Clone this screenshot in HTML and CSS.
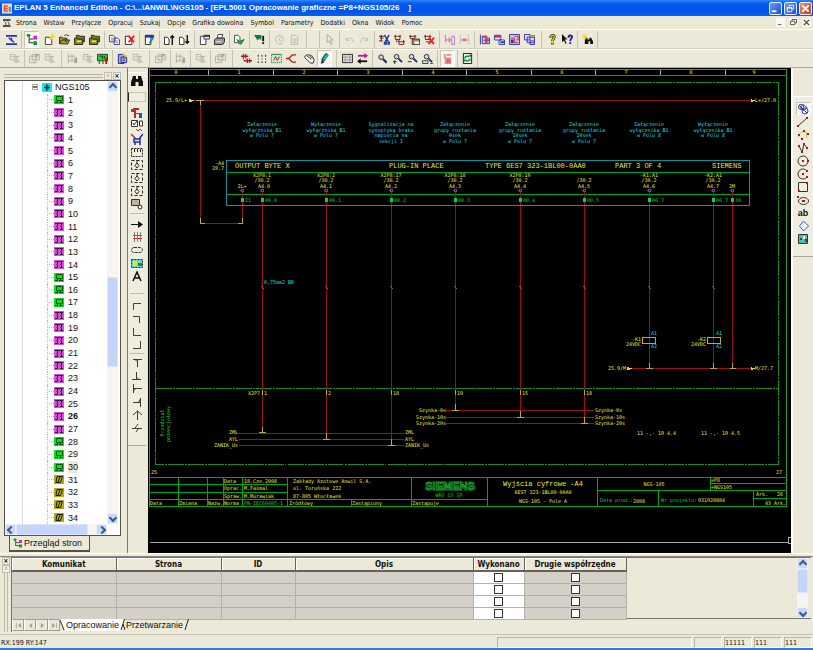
FILE: index.html
```html
<!DOCTYPE html>
<html lang="pl">
<head>
<meta charset="utf-8">
<title>EPLAN 5 Enhanced Edition</title>
<link rel="stylesheet" href="styles.css">
</head>
<body>
<svg class="defs" aria-hidden="true">
  <symbol id="i-page-a" viewBox="0 0 12 12"><path fill="#2030d0" d="M0 1h12v2H0zM0 10h12v2H0z"/><path fill="none" stroke="#2030d0" stroke-width="1.5" d="M3 4l3 3 3 2M6 4v3"/></symbol>
  <symbol id="i-tree" viewBox="0 0 12 12"><path fill="none" stroke="#222" d="M1 1.500h4M3.500 2v8M4 5.500h4M4 9.500h4"/><path fill="#e020c0" d="M8 2h4v4H8z"/><path fill="#00a030" d="M8 8h4v4H8zM1 0h3v3H1z"/></symbol>
  <symbol id="i-new" viewBox="0 0 12 12"><path fill="#fff" stroke="#333" d="M1.500 3.500h4l3 3v5h-7z"/><path fill="none" stroke="#e8d820" d="M9 0v6M6 3h6M7 1l4 4M11 1L7 5"/></symbol>
  <symbol id="i-open" viewBox="0 0 12 12"><path fill="#a8a020" stroke="#222" d="M.5 10.500v-7h3l1 1h4v2h3l-2 4.500z"/><path stroke="#222" fill="none" d="M.5 10.500l2.500-4h6M6 2c1-2 3-1 4 0l1-1M6 7l3 2"/></symbol>
  <symbol id="i-folder" viewBox="0 0 12 12"><path fill="#807c18" stroke="#222" d="M2.500 4.500v-3h3l1 1h5v6h-2M.5 11.500v-7h3l1 1h5v6z"/><path fill="#eee860" d="M3 7h5v2H3z"/></symbol>
  <symbol id="i-copy" viewBox="0 0 12 12"><path fill="#fff" stroke="#383880" d="M.5 1.500h4l2 2v5h-6zM5.500 4.500h4l2 2v5h-6z"/><path stroke="#7078c0" d="M2 4.500h3M2 6.500h3M7 7.500h3M7 9.500h3"/></symbol>
  <symbol id="i-docdel" viewBox="0 0 12 12"><path fill="#fff" stroke="#222" d="M1.500 2.500h4l3 3v6h-7z"/><path stroke="#f01818" stroke-width="2" d="M5 2l6 7M11 2L5 9"/></symbol>
  <symbol id="i-docedit" viewBox="0 0 12 12"><path fill="#fff" stroke="#222" d="M1.500 1.500h9v2h-3v8h-6z"/><path fill="#2038c0" d="M1 1h9v3H1z"/><path stroke="#1890a0" stroke-width="2" d="M10 4l-4 6"/></symbol>
  <symbol id="i-docup" viewBox="0 0 12 12"><path fill="#fff" stroke="#222" d="M.5 3.500h3l2 2v6h-5z"/><path stroke="#111" fill="none" stroke-width="1.500" d="M9 12V2M7 4l2-2 2 2"/></symbol>
  <symbol id="i-docdown" viewBox="0 0 12 12"><path fill="#fff" stroke="#222" d="M.5 3.500h3l2 2v6h-5z"/><path stroke="#111" fill="none" stroke-width="1.500" d="M9 1v9M7 8l2 2 2-2"/></symbol>
  <symbol id="i-preview" viewBox="0 0 12 12"><path fill="#fff" stroke="#333" d="M1.500 2.500h4l2 2v7h-6z"/><path fill="#dde" stroke="#335" d="M5.500 1.500h6v4h-6z"/><path fill="#335" d="M5 1h7v2H5z"/></symbol>
  <symbol id="i-print" viewBox="0 0 12 12"><path fill="#fff" stroke="#333" d="M4.500.5h5l-1 4h-5z"/><path fill="#999" stroke="#222" d="M.5 6.500l2-2h9v4l-2 3h-9z"/><path fill="#eee" d="M2 8h6v1H2z"/></symbol>
  <symbol id="i-check" viewBox="0 0 12 12"><path fill="#fff" stroke="#444" d="M.5 1.500h4l2 2v6h-6z"/><path stroke="#188038" fill="#30a050" d="M3 6l3 2 5-2-3 5H6z"/></symbol>
  <symbol id="i-warn" viewBox="0 0 12 12"><path fill="#107830" d="M0 1h8v5H6V4L4 7z"/><path fill="#111" d="M9 2h2v6H9zM9 9h2v2H9z"/></symbol>
  <symbol id="i-at" viewBox="0 0 12 12"><path fill="none" stroke="#bbb8aa" d="M10 10c-5 3-9-1-8-5s6-5 8-1-4 6-4 2 3-1 3-1"/></symbol>
  <symbol id="i-gdoc" viewBox="0 0 12 12"><path fill="none" stroke="#bbb8aa" d="M2.500 1.500h5l2 2v8h-7zM4 5.500h4M4 7.500h4M4 9.500h4"/></symbol>
  <symbol id="i-gcur" viewBox="0 0 12 12"><path fill="none" stroke="#aaa69a" d="M3.500.5v9l2-2 2 4 1.500-1-2-4h3z"/></symbol>
  <symbol id="i-undo" viewBox="0 0 12 12"><path fill="none" stroke="#bbb8aa" d="M2.500 4v3h3M3 7c2-4 7-3 7 2"/></symbol>
  <symbol id="i-redo" viewBox="0 0 12 12"><path fill="none" stroke="#bbb8aa" d="M9.500 4v3h-3M9 7C7 3 2 4 2 9"/></symbol>
  <symbol id="i-cut" viewBox="0 0 12 12"><path fill="none" stroke="#501818" d="M0 2.500h6M2.500 1v7M0 7.500h4M1 4.500h4"/><path fill="none" stroke="#2038a0" stroke-width="1.500" d="M6 1l4 7M11 1L7 8M6 9h2v2H6zM10 9h2v2h-2z"/></symbol>
  <symbol id="i-symb" viewBox="0 0 12 12"><path fill="none" stroke="#702020" d="M0 2.500h8M1.500 1v5h5V1M4 8.500h8M5.500 6.500v5h5v-5M3 6v3"/></symbol>
  <symbol id="i-paste" viewBox="0 0 12 12"><path fill="none" stroke="#702020" d="M0 2.500h8M1.500 1v4h5V1"/><path fill="#a09040" stroke="#333" d="M3.500 5.500h8v6h-8z"/><path fill="#eee" d="M6 8h5v3H6z"/></symbol>
  <symbol id="i-symdel" viewBox="0 0 12 12"><path fill="none" stroke="#702020" d="M0 2.500h8M1.500 1v5h5V1M2 8.500h5"/><path stroke="#e82020" stroke-width="2" d="M5 4l6 7M11 4l-6 7"/></symbol>
  <symbol id="i-in" viewBox="0 0 12 12"><path fill="none" stroke="#a878c8" d="M1.500 1v8M8.500 2.500h3v9h-3z"/><path fill="none" stroke="#d05070" d="M2 6.500h5M5 4l2 2.500L5 9"/></symbol>
  <symbol id="i-out" viewBox="0 0 12 12"><path fill="none" stroke="#c8c0b4" d="M1.500 1v10M10.500 1v10"/><path fill="#d87878" d="M4 5h4v3H4zM2 6h8v1H2z"/></symbol>
  <symbol id="i-blk" viewBox="0 0 12 12"><path fill="#d8d4ee" stroke="#3030a0" d="M1.500.5v11M3.500 2.500h4v8h-4zM8.500 4.500h3v6h-3z"/><path fill="#d03060" d="M4 2h5v2H4zM5 6h6v2H5z"/></symbol>
  <symbol id="i-blk2" viewBox="0 0 12 12"><path fill="#eee" stroke="#3030a0" d="M.5 1.500h7v5h-7zM5.500 6.500h6v5h-6z"/><path fill="#c82090" d="M1 1h6v3H1z"/><path fill="#2830a0" d="M7 8h4v2H7z"/></symbol>
  <symbol id="i-blk3" viewBox="0 0 12 12"><path fill="#c8c4ec" stroke="#3030b0" d="M.5.5h11v11H.5z"/><path fill="none" stroke="#c03050" d="M2 4.500h4v5h4M6 2.500h4v4H8"/><path fill="#3030a0" d="M2 6h3v4H2z"/></symbol>
  <symbol id="i-blk4" viewBox="0 0 12 12"><path fill="#dcd8f4" stroke="#3030b0" d="M.5.500h6v6h-6zM3.500 3.500h8v6h-8zM6.500 7.500h5v4h-5z"/><path fill="#a0a020" d="M7 1h5v2H7z"/></symbol>
  <symbol id="i-help" viewBox="0 0 12 12"><path fill="none" stroke="#222" stroke-width="3" d="M4 4c0-3 4-3 4-1 0 2-2 2-2 5M6 9.500v2"/><path fill="none" stroke="#d8d020" stroke-width="1.500" d="M4 4c0-3 4-3 4-1 0 2-2 2-2 5M6 9.500v2"/></symbol>
  <symbol id="i-chelp" viewBox="0 0 12 12"><path fill="#111" d="M0 0v9l2-2 2 4 1-1-2-4h3z"/><path fill="none" stroke="#202090" stroke-width="2" d="M7 4c0-3 4-3 4-1S9 5 9 8M9 9v2"/></symbol>
  <symbol id="i-find" viewBox="0 0 12 12"><path fill="#111" d="M2 1h3v3h2V1h3l2 6v4H7.500V7h-3v4H0V7z"/></symbol>
  <symbol id="i-findy" viewBox="0 0 12 12"><path fill="#111" d="M4 4h2v2h2V4h2l2 4v3H9V8H7v3H3V8z"/><path stroke="#e8d820" d="M3 0v6M0 3h6M1 1l4 4M5 1L1 5"/></symbol>
  <symbol id="i-g1" viewBox="0 0 12 12"><path fill="none" stroke="#b8b4a6" d="M1.500 1.500h5v6h-5zM3 4h8M8.500 3v8M5 9.500h7"/><path fill="#c8c4b6" d="M6 6h4v4H6z"/></symbol>
  <symbol id="i-g2" viewBox="0 0 12 12"><path fill="none" stroke="#b4b0a2" d="M.5 3.500h7v7h-7zM3.500 1.500h8v6h-8zM2 6l4 3M6 3l3 3"/><path fill="#aaa698" d="M7 1h3v3H7z"/></symbol>
  <symbol id="i-g3" viewBox="0 0 12 12"><path fill="none" stroke="#b4b0a2" d="M1.500 0v11M1 3.500h8M5.500 1v8M1 8.500h10"/><path fill="#aaa698" d="M8 5h3v6H8z"/></symbol>
  <symbol id="i-green" viewBox="0 0 12 12"><path fill="#20d040" stroke="#184018" d="M.5 1.500h11v7H.5z"/><path stroke="#104010" fill="none" d="M3 3.500h3v3M8 3v3M2.500 9v3M6.500 9v3"/><path fill="#d01010" d="M9 5h2v7H9z"/></symbol>
  <symbol id="i-docclk" viewBox="0 0 12 12"><path fill="#a8a8e0" stroke="#202080" d="M1.500 1.500h6v10h-6z"/><path stroke="#202080" fill="#c8c8f0" d="M4.500 4.500h6v6h-6z"/><path stroke="#202080" d="M6 6.500h3M6 8.500h3"/><path fill="#e8d820" d="M6 0h2v3H6zM9 2h2v2H9z"/></symbol>
  <symbol id="i-plug" viewBox="0 0 12 12"><path fill="none" stroke="#a02030" stroke-width="1.500" d="M0 3.500h8M5 1v5M3 8.500h9M7 6v5"/><path stroke="#333" d="M2.500 1v6M9.500 6v5"/></symbol>
  <symbol id="i-dots" viewBox="0 0 12 12"><path fill="#222" d="M2 2h1v2H2zM6 2h1v2H6zM10 2h1v2h-1zM2 6h1v1H2zM6 6h1v1H6zM10 6h1v1h-1zM2 9h1v2H2zM6 9h1v2H6zM10 9h1v2h-1z"/></symbol>
  <symbol id="i-snap" viewBox="0 0 12 12"><path fill="#c8e8c8" stroke="#186030" stroke-dasharray="1 1" d="M.5 1.500h11v9H.5z"/><path fill="none" stroke="#b02020" d="M3 8l2-4 2 4 2-4"/><path fill="#209050" d="M1 1h10v1H1z"/></symbol>
  <symbol id="i-route" viewBox="0 0 12 12"><path fill="none" stroke="#b02020" stroke-width="1.500" d="M11 2H7L3 6l4 4h4M3 6H0"/></symbol>
  <symbol id="i-hand" viewBox="0 0 12 12"><path fill="#fff" stroke="#222" d="M1 3.500c2-2 5-2 8 0l2 4-1 3.500H7L1 5z"/><path stroke="#222" d="M3 3l5 4M6 3l3 3"/></symbol>
  <symbol id="i-pen" viewBox="0 0 12 12"><path stroke="#105858" stroke-width="4" d="M9 1L4 8"/><path stroke="#20c0b0" stroke-width="2" d="M9 2L5 7"/><path fill="#222" d="M2 12l1-5 3 3z"/></symbol>
  <symbol id="i-panel" viewBox="0 0 12 12"><path fill="#ddd" stroke="#222" d="M.5 1.500h11v9H.5z"/><path stroke="#999" d="M3.500 2v8M8.500 2v8M1 4.500h10M1 7.500h10"/></symbol>
  <symbol id="i-swap" viewBox="0 0 12 12"><path fill="none" stroke="#c018a0" stroke-width="2" d="M1 3h8"/><path fill="#c018a0" d="M8 0l4 3-4 3z"/><path stroke="#111" stroke-width="2" d="M3 9h8"/><path fill="#111" d="M4 6L0 9l4 3z"/></symbol>
  <symbol id="i-zoom" viewBox="0 0 12 12"><circle cx="4.500" cy="4.500" r="2.500" fill="#c8d8e8" stroke="#222"/><path stroke="#203070" stroke-width="2.500" d="M6.500 6.500l4 4"/></symbol>
  <symbol id="i-zoomp" viewBox="0 0 12 12"><circle cx="5" cy="4" r="2.500" fill="#c8d8e8" stroke="#222"/><path stroke="#203070" stroke-width="2" d="M7 6l4 4"/><path stroke="#222" d="M1 9.500h4M3 8v4"/></symbol>
  <symbol id="i-zoomm" viewBox="0 0 12 12"><circle cx="5" cy="4" r="2.500" fill="#c8d8e8" stroke="#222"/><path stroke="#203070" stroke-width="2" d="M7 6l4 4"/><path stroke="#222" d="M1 9.500h4"/></symbol>
  <symbol id="i-zooma" viewBox="0 0 12 12"><circle cx="5" cy="4" r="2.500" fill="#c8d8e8" stroke="#222"/><path stroke="#203070" stroke-width="2" d="M7 6l4 4"/><path fill="none" stroke="#333" d="M.5 8.500h6v3h-6zM9 11.500h3"/></symbol>
  <symbol id="i-pink" viewBox="0 0 12 12"><path fill="#f08890" d="M2 1h2v5H2zM3 5h7v7H3zM5 1h5v2H5z"/><path fill="#c84850" d="M5 7h4v1H5zM5 9h4v1H5z"/></symbol>
  <symbol id="i-sync" viewBox="0 0 12 12"><path fill="#e8f4e8" stroke="#111" d="M1.500.500h9v11h-9z"/><path fill="none" stroke="#108030" stroke-width="1.500" d="M3 6c0-3 4-3 5-2M9 6c0 3-4 3-5 2"/><path fill="#108030" d="M7 2h3v3zM2 7h3l-3 3z"/></symbol>
  <symbol id="v-add" viewBox="0 0 12 12"><path fill="#c02030" d="M2 1h6v2H5v3h3v1H5v4H3V3H2z"/><path fill="#2050c0" d="M8 6h3v5H8z"/><path fill="#208040" d="M0 2h3v3H0z"/></symbol>
  <symbol id="v-chk" viewBox="0 0 12 12"><path fill="#fff" stroke="#333" d="M.5.500h6v6h-6zM8.500 1v5h3V1z"/><path stroke="#333" fill="none" d="M2 3l1 2 3-4"/><path fill="none" stroke="#c02030" d="M5 9l2 2 2-2 2 2"/></symbol>
  <symbol id="v-wr" viewBox="0 0 12 12"><path fill="none" stroke="#c02030" stroke-width="1.500" d="M0 1l5 5"/><path fill="none" stroke="#2030b0" stroke-width="1.500" d="M3 6h6v3H3zM4 9v3M9 9v3M8 6l4-5"/></symbol>
  <symbol id="v-dash" viewBox="0 0 12 12"><path fill="none" stroke="#222" stroke-dasharray="2 1" d="M.5 2.500h11v8H.5z"/><path stroke="#222" d="M3.500 3v3M6.500 3v3M9.500 3v3"/></symbol>
  <symbol id="v-dia" viewBox="0 0 12 12"><path fill="none" stroke="#222" stroke-dasharray="3 2" d="M.5 1.500h11v9H.5z"/><path fill="#fff" stroke="#222" d="M6 4l2 2.500L6 9 4 6.500zM6 1v3"/></symbol>
  <symbol id="v-box" viewBox="0 0 12 12"><path fill="#c0b0a8" stroke="#333" d="M.5 1.500h8v6h-8z"/><circle cx="9" cy="9" r="2" fill="#fff" stroke="#222"/></symbol>
  <symbol id="v-arr" viewBox="0 0 12 12"><path stroke="#111" d="M0 6.500h8"/><path fill="#111" d="M7 3l5 3.500L7 10z"/></symbol>
  <symbol id="v-cab" viewBox="0 0 12 12"><path stroke="#888" d="M3.500 1v10M6.500 1v10M9.500 1v10"/><path stroke="#d03030" d="M2 4.500h9M2 7.500h9"/></symbol>
  <symbol id="v-cap" viewBox="0 0 12 12"><rect x=".5" y="3.500" width="11" height="5" rx="2.500" fill="none" stroke="#333" stroke-dasharray="3 1"/></symbol>
  <symbol id="v-pic" viewBox="0 0 12 12"><path fill="#60d8d8" stroke="#222" stroke-dasharray="2 1" d="M.5 2.500h11v8H.5z"/><path fill="#e8e020" d="M2 4h4v5H2z"/><path fill="#208050" d="M7 6h4v3H7z"/></symbol>
  <symbol id="v-txt" viewBox="0 0 12 12"><path fill="none" stroke="#111" stroke-width="1.500" d="M2 11l4-9 4 9M3 8h6"/></symbol>
  <symbol id="c-1" viewBox="0 0 12 12"><path fill="none" stroke="#443c30" d="M2.500 10V3.500H10"/></symbol>
  <symbol id="c-2" viewBox="0 0 12 12"><path fill="none" stroke="#443c30" d="M2 3.500h6.500V10"/></symbol>
  <symbol id="c-3" viewBox="0 0 12 12"><path fill="none" stroke="#443c30" d="M2.500 2v7.500H10"/></symbol>
  <symbol id="c-4" viewBox="0 0 12 12"><path fill="none" stroke="#443c30" d="M9.500 2v7.500H2"/></symbol>
  <symbol id="c-5" viewBox="0 0 12 12"><path fill="none" stroke="#443c30" d="M2 2.500h9M4 2.500l2 2M6.500 3v7"/></symbol>
  <symbol id="c-6" viewBox="0 0 12 12"><path fill="none" stroke="#443c30" d="M1 9.500h9M8 9.500l-2-2M5.500 2v7"/></symbol>
  <symbol id="c-7" viewBox="0 0 12 12"><path fill="none" stroke="#443c30" d="M2.500 1v9M2.500 8l2-2.500M3 5.500h8"/></symbol>
  <symbol id="c-8" viewBox="0 0 12 12"><path fill="none" stroke="#443c30" d="M9.500 2v9M9.500 3l-2 3.500M2 6.500h7"/></symbol>
  <symbol id="c-9" viewBox="0 0 12 12"><path fill="none" stroke="#443c30" d="M6.500 2v9M2 6l4.500-4L11 6"/></symbol>
  <symbol id="c-10" viewBox="0 0 12 12"><path fill="none" stroke="#443c30" d="M1 6.500h10M7 2L4 6M8 6l-3 4"/></symbol>
  <symbol id="d-1" viewBox="0 0 12 12"><path fill="none" stroke="#3038a0" d="M2 2l8 8M6 1.500l4 3-3 3-4-3z"/><circle cx="8" cy="8" r="3" fill="none" stroke="#3038a0"/><circle cx="4" cy="4" r="2.500" fill="none" stroke="#3038a0"/></symbol>
  <symbol id="d-2" viewBox="0 0 12 12"><path stroke="#333" d="M1 10l9-8"/><path fill="#b01818" d="M0 9h2v2H0zM9 1h2v2H9z"/></symbol>
  <symbol id="d-3" viewBox="0 0 12 12"><path fill="none" stroke="#c8c040" d="M2 8c0-5 4-6 7-5l1 6"/><path fill="#b01818" d="M1 5h2v2H1zM4 9h2v2H4zM6 1h2v2H6zM10 4h2v2h-2z"/></symbol>
  <symbol id="d-4" viewBox="0 0 12 12"><path fill="none" stroke="#333" d="M2 4l3 6 2-8 3 4"/><path fill="#b01818" d="M1 3h2v2H1zM4 9h2v2H4zM6 1h2v2H6zM9 5h2v2H9z"/></symbol>
  <symbol id="d-5" viewBox="0 0 12 12"><circle cx="6" cy="6" r="5" fill="none" stroke="#333"/><path fill="#b01818" d="M5 5h2v2H5zM10 5h2v2h-2z"/></symbol>
  <symbol id="d-6" viewBox="0 0 12 12"><path fill="none" stroke="#333" d="M10 3a5 5 0 1 0 0 6"/><path fill="#b01818" d="M5 5h2v2H5zM9 2h2v2H9zM9 8h2v2H9z"/></symbol>
  <symbol id="d-7" viewBox="0 0 12 12"><path fill="none" stroke="#333" d="M1.500 1.500h9v9h-9z"/><path fill="#b01818" d="M9 1h2v2H9zM1 9h2v2H1z"/></symbol>
  <symbol id="d-8" viewBox="0 0 12 12"><ellipse cx="6.500" cy="7" rx="5" ry="3.500" fill="none" stroke="#333"/><path fill="#b01818" d="M5 6h3v2H5zM0 2h2v2H0z"/></symbol>
  <symbol id="d-10" viewBox="0 0 12 12"><path fill="#f4f4ff" stroke="#4850c8" d="M6.500 1l5 5-5 5-4-5z"/></symbol>
  <symbol id="d-11" viewBox="0 0 12 12"><path fill="#38c8b8" stroke="#333" d="M1.500 1.500h9v9h-9z"/><path fill="#b01818" d="M3 5h2v2H3zM8 6h2v3H8z"/><path fill="#fff" d="M6 3h2v3H6z"/></symbol>
  <symbol id="t-net" viewBox="0 0 10 9"><path fill="#18e8e8" d="M0 0h10v9H0z"/><path stroke="#022" d="M5 1v7M2 4.500h6M3 2.500l4 4M7 2.500l-4 4"/></symbol>
  <symbol id="t-g" viewBox="0 0 10 9"><path fill="#08e018" d="M0 0h10v9H0z"/><path fill="none" stroke="#045008" d="M2.500 1.500h6v4h-6zM3.500 6v2M6.500 6v2M1 7.500h2M5 7.500h4"/></symbol>
  <symbol id="t-p" viewBox="0 0 10 9"><path fill="#d850d8" d="M0 0h10v9H0z"/><path fill="none" stroke="#401048" d="M1 1.500h8M3.500 2v2M7.500 2v2M2.500 4l1 1v2M6.500 4l1 1v2M1 7.500h3M6 7.500h3"/></symbol>
  <symbol id="t-y" viewBox="0 0 10 9"><path fill="#b0a818" d="M0 0h10v9H0z"/><path fill="none" stroke="#201c00" d="M3 1.500h5.500l-2 6H2zM6 2L4 7"/></symbol>
</svg>

<header class="titlebar">
  <svg class="appicon" viewBox="0 0 12 12"><path fill="#f4d8c8" d="M0 0h12v12H0z"/><path fill="#e05030" d="M2 2h5v2H4v1h3v2H4v1h3v2H2z"/><path fill="#7088c0" d="M8 4h3v6H8z"/></svg>
  <h1 class="title">EPLAN 5 Enhanced Edition - C:\...\ANWIL\NGS105 - [EPL5001 Opracowanie graficzne =P8+NGS105/26 &nbsp;&nbsp; ]</h1>
  <button class="win" aria-label="Minimalizuj"><svg viewBox="0 0 12 12"><path fill="#fff" d="M2 8h5v2H2z"/></svg></button>
  <button class="win" aria-label="Przywróć"><svg viewBox="0 0 12 12"><path fill="none" stroke="#fff" d="M4.500 4V2.500h5v4H8M2.500 5.500h5v4h-5zM2 5h6"/></svg></button>
  <button class="win win-close" aria-label="Zamknij"><svg viewBox="0 0 12 12"><path stroke="#fff" stroke-width="2" d="M2.500 2.500l7 7M9.500 2.500l-7 7"/></svg></button>
</header>

<nav class="menubar">
  <svg class="docicon" viewBox="0 0 12 10"><path fill="#222" d="M0 0h10v2H0zM0 8h10v2H0z"/><path stroke="#222" fill="none" d="M2 3l2 2v3M6 3l2 2v3"/></svg>
  <button>Strona</button><button>Wstaw</button><button>Przyłącze</button><button>Opracuj</button><button>Szukaj</button><button>Opcje</button><button>Grafika dowolna</button><button>Symbol</button><button>Parametry</button><button>Dodatki</button><button>Okna</button><button>Widok</button><button>Pomoc</button>
  <span class="fill"></span>
  <button class="mdi" aria-label="Minimalizuj okno"><svg viewBox="0 0 8 8"><path fill="#444" d="M1 6h4v1H1z"/></svg></button>
  <button class="mdi" aria-label="Przywróć okno"><svg viewBox="0 0 8 8"><path fill="none" stroke="#444" d="M2.500 2V.5h5v4H6M.500 2.500h5v4h-5z"/></svg></button>
  <button class="mdi" aria-label="Zamknij okno"><svg viewBox="0 0 8 8"><path stroke="#444" stroke-width="1.500" d="M1 1l6 6M7 1L1 7"/></svg></button>
</nav>

<div class="toolbar" role="toolbar" aria-label="Standard">
  <button aria-label="Strona"><svg><use href="#i-page-a"/></svg></button><i class="sep"></i>
  <button class="on" aria-label="Przegląd"><svg><use href="#i-tree"/></svg></button><i class="thin"></i>
  <button aria-label="Nowa"><svg><use href="#i-new"/></svg></button>
  <button aria-label="Otwórz"><svg><use href="#i-open"/></svg></button>
  <button aria-label="Katalog"><svg><use href="#i-folder"/></svg></button>
  <button aria-label="Projekt"><svg><use href="#i-folder"/></svg></button><i class="sep"></i>
  <button aria-label="Kopiuj"><svg><use href="#i-copy"/></svg></button>
  <button aria-label="Usuń stronę"><svg><use href="#i-docdel"/></svg></button><i class="sep"></i>
  <button aria-label="Edytuj"><svg><use href="#i-docedit"/></svg></button><i class="sep"></i>
  <button aria-label="Poprzednia"><svg><use href="#i-docup"/></svg></button>
  <button aria-label="Następna"><svg><use href="#i-docdown"/></svg></button><i class="sep"></i>
  <button aria-label="Podgląd"><svg><use href="#i-preview"/></svg></button>
  <button aria-label="Drukuj"><svg><use href="#i-print"/></svg></button><i class="sep"></i>
  <button aria-label="Sprawdź"><svg><use href="#i-check"/></svg></button><i class="sep"></i>
  <button aria-label="Błędy"><svg><use href="#i-warn"/></svg></button><i class="sep"></i>
  <button aria-label="Poczta"><svg><use href="#i-at"/></svg></button>
  <button aria-label="Raport"><svg><use href="#i-gdoc"/></svg></button><i class="sep wide"></i><i class="gap"></i><i class="sep"></i>
  <button aria-label="Wybierz"><svg><use href="#i-gcur"/></svg></button><i class="sep"></i>
  <button aria-label="Cofnij"><svg><use href="#i-undo"/></svg></button>
  <button aria-label="Ponów"><svg><use href="#i-redo"/></svg></button><i class="sep"></i>
  <button aria-label="Wytnij"><svg><use href="#i-cut"/></svg></button>
  <button aria-label="Kopiuj symbol"><svg><use href="#i-symb"/></svg></button>
  <button aria-label="Wklej"><svg><use href="#i-paste"/></svg></button>
  <button aria-label="Usuń"><svg><use href="#i-symdel"/></svg></button><i class="sep"></i>
  <button aria-label="Wstaw odstęp"><svg><use href="#i-in"/></svg></button>
  <button aria-label="Usuń odstęp"><svg><use href="#i-out"/></svg></button><i class="sep"></i>
  <button aria-label="Blok"><svg><use href="#i-blk"/></svg></button>
  <button aria-label="Kopiuj blok"><svg><use href="#i-blk2"/></svg></button>
  <button aria-label="Makro"><svg><use href="#i-blk3"/></svg></button>
  <button aria-label="Wstaw makro"><svg><use href="#i-blk4"/></svg></button><i class="sep wide"></i>
  <button aria-label="Pomoc"><svg><use href="#i-help"/></svg></button>
  <button aria-label="Co to jest"><svg><use href="#i-chelp"/></svg></button><i class="sep"></i>
  <button aria-label="Szukaj"><svg><use href="#i-findy"/></svg></button><i class="sep"></i>
</div>

<div class="toolbar second" role="toolbar" aria-label="Edycja">
  <button aria-label="Urządzenie"><svg><use href="#i-g1"/></svg></button><i class="sep"></i>
  <button aria-label="Zacisk"><svg><use href="#i-g2"/></svg></button>
  <button aria-label="Kabel"><svg><use href="#i-g1"/></svg></button><i class="sep wide"></i>
  <button aria-label="Numeracja"><svg><use href="#i-g3"/></svg></button>
  <button aria-label="Lista"><svg><use href="#i-g1"/></svg></button>
  <button aria-label="Kontrola"><svg><use href="#i-green"/></svg></button><i class="sep"></i>
  <button aria-label="Historia"><svg><use href="#i-docclk"/></svg></button>
  <button aria-label="Zmiany"><svg><use href="#i-g1"/></svg></button><i class="sep wide"></i>
  <button aria-label="Dodaj"><svg><use href="#i-g2"/></svg></button><i class="sep"></i>
  <button aria-label="Przenieś"><svg><use href="#i-g3"/></svg></button><i class="sep"></i>
  <button aria-label="Zmień"><svg><use href="#i-g1"/></svg></button><i class="sep"></i>
  <button aria-label="Właściwości"><svg><use href="#i-g2"/></svg></button><i class="sep wide"></i><i class="thin"></i>
  <button aria-label="Połączenia"><svg><use href="#i-plug"/></svg></button>
  <button aria-label="Siatka"><svg><use href="#i-dots"/></svg></button>
  <button aria-label="Przyciąganie"><svg><use href="#i-snap"/></svg></button>
  <button aria-label="Trasa"><svg><use href="#i-route"/></svg></button><i class="thin"></i>
  <button aria-label="Przesuń"><svg><use href="#i-hand"/></svg></button>
  <button class="on" aria-label="Rysuj"><svg><use href="#i-pen"/></svg></button><i class="sep wide"></i>
  <button aria-label="Szafa"><svg><use href="#i-panel"/></svg></button>
  <button aria-label="Zamień"><svg><use href="#i-swap"/></svg></button><i class="sep"></i>
  <button aria-label="Powiększ"><svg><use href="#i-zoom"/></svg></button>
  <button aria-label="Powiększ okno"><svg><use href="#i-zoomp"/></svg></button>
  <button aria-label="Pomniejsz"><svg><use href="#i-zoomm"/></svg></button>
  <button aria-label="Cała strona"><svg><use href="#i-zooma"/></svg></button><i class="sep"></i>
  <button class="on" aria-label="Warstwy"><svg><use href="#i-pink"/></svg></button><i class="sep"></i>
  <button aria-label="Odśwież"><svg><use href="#i-sync"/></svg></button><i class="sep"></i>
</div>

<main class="work">
  <aside class="browser">
    <div class="grip"><i class="lines"></i><button aria-label="Zwiń">◦</button><button aria-label="Zamknij panel">×</button></div>
    <div class="treebox">
      <ul class="tree">
        <li class="root"><i class="minus"></i><svg><use href="#t-net"/></svg><span>NGS105</span></li>
        <li><svg><use href="#t-g"/></svg><span>1</span></li>
        <li><svg><use href="#t-p"/></svg><span>2</span></li>
        <li><svg><use href="#t-p"/></svg><span>3</span></li>
        <li><svg><use href="#t-p"/></svg><span>4</span></li>
        <li><svg><use href="#t-p"/></svg><span>5</span></li>
        <li><svg><use href="#t-p"/></svg><span>6</span></li>
        <li><svg><use href="#t-p"/></svg><span>7</span></li>
        <li><svg><use href="#t-p"/></svg><span>8</span></li>
        <li><svg><use href="#t-p"/></svg><span>9</span></li>
        <li><svg><use href="#t-p"/></svg><span>10</span></li>
        <li><svg><use href="#t-p"/></svg><span>11</span></li>
        <li><svg><use href="#t-p"/></svg><span>12</span></li>
        <li><svg><use href="#t-p"/></svg><span>13</span></li>
        <li><svg><use href="#t-p"/></svg><span>14</span></li>
        <li><svg><use href="#t-g"/></svg><span>15</span></li>
        <li><svg><use href="#t-g"/></svg><span>16</span></li>
        <li><svg><use href="#t-g"/></svg><span>17</span></li>
        <li><svg><use href="#t-p"/></svg><span>18</span></li>
        <li><svg><use href="#t-p"/></svg><span>19</span></li>
        <li><svg><use href="#t-p"/></svg><span>20</span></li>
        <li><svg><use href="#t-p"/></svg><span>21</span></li>
        <li><svg><use href="#t-p"/></svg><span>22</span></li>
        <li><svg><use href="#t-p"/></svg><span>23</span></li>
        <li><svg><use href="#t-p"/></svg><span>24</span></li>
        <li><svg><use href="#t-p"/></svg><span>25</span></li>
        <li class="current"><svg><use href="#t-p"/></svg><span>26</span></li>
        <li><svg><use href="#t-p"/></svg><span>27</span></li>
        <li><svg><use href="#t-g"/></svg><span>28</span></li>
        <li><svg><use href="#t-g"/></svg><span>29</span></li>
        <li class="marked"><svg><use href="#t-g"/></svg><span>30</span></li>
        <li><svg><use href="#t-y"/></svg><span>31</span></li>
        <li><svg><use href="#t-y"/></svg><span>32</span></li>
        <li><svg><use href="#t-y"/></svg><span>33</span></li>
        <li><svg><use href="#t-y"/></svg><span>34</span></li>
      </ul>
      <div class="vscroll"><b class="arrow up"></b><i class="track-a"></i><i class="thumb"></i><i class="track-b"></i><b class="arrow down"></b></div>
      <div class="hscroll"><b class="arrow left"></b><i class="thumb"></i><i class="rest"></i><b class="arrow right"></b></div>
    </div>
    <button class="sidetab"><svg><use href="#i-tree"/></svg>Przegląd stron</button>
  </aside>

  <div class="vtools left" role="toolbar" aria-label="Symbole">
    <div class="vt-body">
      <button aria-label="Szukaj"><svg><use href="#i-find"/></svg></button>
      <i class="field"></i>
      <button aria-label="Symbol"><svg><use href="#v-add"/></svg></button>
      <button aria-label="Wybór"><svg><use href="#v-chk"/></svg></button>
      <button aria-label="Przewód"><svg><use href="#v-wr"/></svg></button>
      <button aria-label="Listwa"><svg><use href="#v-dash"/></svg></button>
      <button aria-label="Zacisk"><svg><use href="#v-dia"/></svg></button>
      <button aria-label="Wtyk"><svg><use href="#v-dia"/></svg></button>
      <button aria-label="Element"><svg><use href="#v-dia"/></svg></button>
      <button aria-label="Skrzynka"><svg><use href="#v-box"/></svg></button>
      <i class="vsep"></i>
      <button aria-label="Potencjał"><svg><use href="#v-arr"/></svg></button>
      <button aria-label="Kabel"><svg><use href="#v-cab"/></svg></button>
      <button aria-label="Ekran"><svg><use href="#v-cap"/></svg></button>
      <button aria-label="Obraz"><svg><use href="#v-pic"/></svg></button>
      <button aria-label="Tekst"><svg><use href="#v-txt"/></svg></button>
      <i class="vsep tall"></i>
      <button aria-label="Kąt 1"><svg><use href="#c-1"/></svg></button>
      <button aria-label="Kąt 2"><svg><use href="#c-2"/></svg></button>
      <button aria-label="Kąt 3"><svg><use href="#c-3"/></svg></button>
      <button aria-label="Kąt 4"><svg><use href="#c-4"/></svg></button>
      <i class="vsep low"></i>
      <button aria-label="Węzeł 1"><svg><use href="#c-5"/></svg></button>
      <button aria-label="Węzeł 2"><svg><use href="#c-6"/></svg></button>
      <button aria-label="Węzeł 3"><svg><use href="#c-7"/></svg></button>
      <button aria-label="Węzeł 4"><svg><use href="#c-8"/></svg></button>
      <button aria-label="Strzałka"><svg><use href="#c-9"/></svg></button>
      <button aria-label="Przeskok"><svg><use href="#c-10"/></svg></button>
    </div>
  </div>

  <section class="canvas">
  <svg viewBox="148 68 643 484" preserveAspectRatio="xMinYMin meet">
    <g class="green">
      <path class="lite" d="M149 68V507M149 69.500H787M786.500 69V507"/>
      <path d="M149 75.500H787"/>
      <path class="dash" d="M155.500 82.500H778.500V464.500H155.500zM155.500 388.500H778.500"/>
      <path d="M149 477.500H787M149 484.500H288M149 492.500H288M149 499.500H488M149 506.500H787M178.500 477V506M207.500 477V506M223.500 477V506M242.500 477V506M287.500 477V506M411.500 477V506M351.500 499V506M487.500 477V506M597.500 477V506M710.500 477V490M597 490.500H787M710 483.500H787M658.500 490V506M753.500 490V506M753 498.500H787"/>
      <path d="M226 172.500H749M226 194.500H749"/>
    </g>
    <path class="tick" d="M208.500 70v5M273.500 70v5M337.500 70v5M402.500 70v5M466.500 70v5M531.500 70v5M595.500 70v5M660.500 70v5M725.500 70v5"/>
    <g class="s y mid"><text x="176" y="74">0</text><text x="239" y="74">1</text><text x="304" y="74">2</text><text x="368" y="74">3</text><text x="433" y="74">4</text><text x="497" y="74">5</text><text x="562" y="74">6</text><text x="626" y="74">7</text><text x="691" y="74">8</text><text x="754" y="74">9</text></g>
    <path class="red" d="M191 100.500H752M200.500 101V223.500H242.500V191M262.500 191V433M326.500 191V439M391.500 191V445M455.500 191V410M520.500 191V417M584.500 191V423M649.500 191V368M713.500 191V368M732.500 191V368M239 433.500H404M239 439.500H404M239 445.500H404M446 410.500H594M446 417.500H594M446 423.500H594M632 368.500H752"/>
    <path class="cyanl" d="M226.500 160.500H749.500V205.500H226.500z"/>
    <path class="yl" d="M200.500 218V223.500H205M242.500 218V223.500H238M196 100.500h8M200.500 101v4M262.500 427v6M259 432.500h7M326.500 433v6M323 439.500h7M391.500 439v6M388 445.500h7M455.500 404v6M452 410.500h7M520.500 411v6M517 417.500h7M584.500 417v6M581 423.500h7M649.500 363v5M646 368.500h7M713.500 363v5M710 368.500h7M732.500 363v5M730 368.500h6"/>
    <path class="yf" d="M189 99l5 1.500-5 2zM751 99l4 1.500-4 2zM627 367l5 1.500-5 2zM751 367l4 1.500-4 2z"/>
    <g class="s c mid">
      <text x="262" y="126">Załączenie</text><text x="262" y="132">wyłącznika B1</text><text x="262" y="137">w Polu 7</text>
      <text x="326" y="126">Wyłączenie</text><text x="326" y="132">wyłącznika B1</text><text x="326" y="137">w Polu 7</text>
      <text x="391" y="126">Sygnalizacja na</text><text x="391" y="132">synoptyką braku</text><text x="391" y="137">napięcia na</text><text x="391" y="143">sekcji I</text>
      <text x="455" y="126">Załączenie</text><text x="455" y="132">grupy rozłania</text><text x="455" y="137">0sek</text><text x="455" y="143">w Polu 7</text>
      <text x="520" y="126">Załączenie</text><text x="520" y="132">grupy rozłania</text><text x="520" y="137">10sek</text><text x="520" y="143">w Polu 7</text>
      <text x="584" y="126">Załączenie</text><text x="584" y="132">grupy rozłania</text><text x="584" y="137">20sek</text><text x="584" y="143">w Polu 7</text>
      <text x="649" y="126">Załączenie</text><text x="649" y="132">wyłącznika B1</text><text x="649" y="137">w Polu 8</text>
      <text x="713" y="126">Wyłączenie</text><text x="713" y="132">wyłącznika B1</text><text x="713" y="137">w Polu 8</text>
    </g>
    <g class="m y">
      <text x="235" y="168">OUTPUT BYTE X</text><text x="389" y="168">PLUG-IN PLACE</text><text x="485" y="168">TYPE 6ES7 323-1BL00-0AA0</text><text x="615" y="168">PART 3 OF 4</text><text x="712" y="168">SIEMENS</text>
    </g>
    <g class="s y mid">
      <text x="262" y="177">X2P8:1</text><text x="262" y="182">/30.2</text><text x="264" y="188">A4.0</text>
      <text x="326" y="177">X2P8:2</text><text x="326" y="182">/30.2</text><text x="326" y="188">A4.1</text>
      <text x="391" y="177">X2P8:17</text><text x="391" y="182">/30.2</text><text x="391" y="188">A4.2</text>
      <text x="455" y="177">X2P8:18</text><text x="455" y="182">/30.2</text><text x="455" y="188">A4.3</text>
      <text x="520" y="177">X2P8:19</text><text x="520" y="182">/30.2</text><text x="520" y="188">A4.4</text>
      <text x="584" y="182">/30.2</text><text x="584" y="188">A4.5</text>
      <text x="649" y="177">-K1:A1</text><text x="649" y="182">/30.2</text><text x="649" y="188">A4.6</text>
      <text x="713" y="177">-K2:A1</text><text x="713" y="182">/30.2</text><text x="713" y="188">A4.7</text>
      <text x="242" y="188">2L+</text><text x="732" y="188">2M</text>
    </g>
    <g class="s y">
      <text x="166" y="102">25.9/L+</text><text x="755" y="102">L+/27.0</text><text x="215" y="165">-A4</text><text x="212" y="170">28.7</text>
      <text x="608" y="370">25.9/M</text><text x="755" y="370">M/27.7</text>
      <text x="248" y="395">X2P7</text><text x="264" y="395">1</text><text x="328" y="395">2</text><text x="393" y="395">18</text><text x="457" y="395">19</text><text x="522" y="395">15</text><text x="586" y="395">18</text>
      <text x="405" y="434">ZML</text><text x="405" y="441">AYL</text><text x="405" y="447">ZANIK_Us</text>
      <text x="595" y="412">Szynka-0s</text><text x="595" y="419">Szynka-10s</text><text x="595" y="425">Szynka-20s</text>
      <text x="637" y="435">11 -,- 19</text><text x="667" y="435">4.4</text><text x="701" y="435">11 -,- 19</text><text x="731" y="435">4.5</text>
      <text x="151" y="474">25</text><text x="776" y="474">27</text>
    </g>
    <g class="s y end">
      <text x="238" y="434">ZML</text><text x="238" y="441">AYL</text><text x="238" y="447">ZANIK_Us</text>
      <text x="446" y="412">Szynka-0s</text><text x="446" y="419">Szynka-10s</text><text x="446" y="425">Szynka-20s</text>
      <text x="641" y="341">-K1</text><text x="641" y="346">24VDC</text><text x="706" y="341">-K2</text><text x="706" y="346">24VDC</text>
    </g>
    <path class="yl" d="M642.500 337.500h13v6h-13zM707.500 337.500h13v6h-13z"/>
    <g class="s c"><text x="651" y="335">A1</text><text x="651" y="348">A2</text><text x="716" y="335">A1</text><text x="716" y="348">A2</text><text x="264" y="284">0,75mm2 BR</text></g>
    <g class="pin"><circle cx="242.500" cy="190.500" r="1.500"/><circle cx="262.500" cy="190.500" r="1.500"/><circle cx="326.500" cy="190.500" r="1.500"/><circle cx="391.500" cy="190.500" r="1.500"/><circle cx="455.500" cy="190.500" r="1.500"/><circle cx="520.500" cy="190.500" r="1.500"/><circle cx="584.500" cy="190.500" r="1.500"/><circle cx="649.500" cy="190.500" r="1.500"/><circle cx="713.500" cy="190.500" r="1.500"/><circle cx="732.500" cy="190.500" r="1.500"/></g>
    <path class="term" d="M241 198h3v4h-3zM261 198h3v4h-3zM325 198h3v4h-3zM390 198h3v4h-3zM454 198h3v4h-3zM519 198h3v4h-3zM583 198h3v4h-3zM648 198h3v4h-3zM712 198h3v4h-3zM731 198h3v4h-3z"/>
    <g class="s g"><text x="245" y="202">21</text><text x="265" y="202">00.0</text><text x="329" y="202">00.1</text><text x="394" y="202">00.2</text><text x="458" y="202">00.3</text><text x="523" y="202">00.4</text><text x="587" y="202">00.5</text><text x="652" y="202">00.7</text><text x="716" y="202">00.7</text><text x="735" y="202">30</text></g>
    <path class="mark" d="M261 286l3 3M325 286l3 3M390 286l3 3M454 286l3 3M519 286l3 3M583 286l3 3M648 286l3 3M712 286l3 3"/>
    <path class="yl" d="M262.500 390v5M326.500 390v5M391.500 390v5M455.500 390v5M520.500 390v5M584.500 390v5"/>
    <g class="s g mid"><text transform="translate(164 423) rotate(-90)">Przedział</text><text transform="translate(170 424) rotate(-90)">potencjałowy</text></g>
    <g class="s y">
      <text x="224" y="483">Data</text><text x="244" y="483">18.Cze.2008</text><text x="224" y="490">Oprac.</text><text x="244" y="490">M.Faśmal</text><text x="224" y="498">Spraw.</text><text x="244" y="498">M.Murawiak</text>
      <text x="150" y="505">Data</text><text x="179" y="505">Zmiana</text><text x="208" y="505">Nazw.</text><text x="224" y="505">Norma</text>
      <text x="293" y="483">Zakłady Azotowe Anwil S.A.</text><text x="293" y="490">ul. Toruńska 222</text><text x="293" y="498">87-805 Włocławek</text>
      <text x="289" y="505">Źródłowy</text><text x="352" y="505">Zastąpiony</text><text x="412" y="505">Zastąpuje</text>
      <text x="711" y="482">=P8</text><text x="711" y="489">+NGS105</text><text x="756" y="496">Ark.</text><text x="777" y="496">26</text><text x="765" y="505">43 Ark.</text>
      <text x="633" y="503">2008</text><text x="698" y="502">931920804</text>
    </g>
    <g class="s g"><text x="244" y="505">PN-IEC60405-1</text><text x="600" y="502">Data prod.:</text><text x="661" y="502">Nr projektu:</text></g>
    <g class="s y mid"><text x="543" y="494">6ES7 323-1BL00-0AA0</text><text x="543" y="503">NGS-105 - Pole A</text><text x="654" y="486">NGS-105</text></g>
    <g class="m y mid"><text x="543" y="486">Wyjścia cyfrowe -A4</text></g>
    <text class="logo" x="450" y="490">SIEMENS</text><text class="s g mid" x="449" y="497">WRO CO SP</text>
    <path class="edge" d="M150 542.500H788M791 537.500h-2.500v6H791"/>
  </svg>
  </section>

  <div class="vtools right" role="toolbar" aria-label="Grafika">
    <div class="vt-body">
      <button class="on" aria-label="Grafika"><svg><use href="#d-1"/></svg></button>
      <button aria-label="Linia"><svg><use href="#d-2"/></svg></button>
      <button aria-label="Krzywa"><svg><use href="#d-3"/></svg></button>
      <button aria-label="Łamana"><svg><use href="#d-4"/></svg></button>
      <button aria-label="Okrąg"><svg><use href="#d-5"/></svg></button>
      <button aria-label="Łuk"><svg><use href="#d-6"/></svg></button>
      <button aria-label="Prostokąt"><svg><use href="#d-7"/></svg></button>
      <button aria-label="Elipsa"><svg><use href="#d-8"/></svg></button>
      <button class="ab">ab</button>
      <button aria-label="Wielokąt"><svg><use href="#d-10"/></svg></button>
      <button aria-label="Obraz"><svg><use href="#d-11"/></svg></button>
    </div>
  </div>
</main>

<section class="messages">
  <div class="sidegrip"><button aria-label="Zamknij komunikaty">×</button><button aria-label="Zwiń komunikaty">◦</button><i class="vlines"></i></div>
  <div class="msgbody">
    <div class="gridwrap">
      <table>
        <thead><tr><th class="w1">Komunikat</th><th class="w2">Strona</th><th class="w3">ID</th><th class="w4">Opis</th><th class="w5">Wykonano</th><th class="w6">Drugie współrzędne</th></tr></thead>
        <tbody>
          <tr><td></td><td></td><td></td><td></td><td class="wh"><input type="checkbox" aria-label="Wykonano 1"></td><td><input type="checkbox" aria-label="Drugie współrzędne 1"></td></tr>
          <tr><td></td><td></td><td></td><td></td><td class="wh"><input type="checkbox" aria-label="Wykonano 2"></td><td><input type="checkbox" aria-label="Drugie współrzędne 2"></td></tr>
          <tr><td></td><td></td><td></td><td></td><td class="wh"><input type="checkbox" aria-label="Wykonano 3"></td><td><input type="checkbox" aria-label="Drugie współrzędne 3"></td></tr>
          <tr><td></td><td></td><td></td><td></td><td class="wh"><input type="checkbox" aria-label="Wykonano 4"></td><td><input type="checkbox" aria-label="Drugie współrzędne 4"></td></tr>
        </tbody>
      </table>
      <span class="fill"></span>
      <div class="vscroll small"><b class="arrow up"></b><i class="thumb"></i><i class="track-b"></i><b class="arrow down"></b></div>
    </div>
    <div class="sheets">
      <button class="nav" aria-label="Pierwszy"><svg viewBox="0 0 8 8"><path fill="#a8a498" d="M1 1h1v6H1zM7 1v6L3 4z"/></svg></button>
      <button class="nav" aria-label="Wstecz"><svg viewBox="0 0 8 8"><path fill="#a8a498" d="M6 1v6L2 4z"/></svg></button>
      <button class="nav" aria-label="Dalej"><svg viewBox="0 0 8 8"><path fill="#a8a498" d="M2 1v6l4-3z"/></svg></button>
      <button class="nav" aria-label="Ostatni"><svg viewBox="0 0 8 8"><path fill="#a8a498" d="M6 1h1v6H6zM1 1v6l4-3z"/></svg></button>
      <svg class="slant" viewBox="0 0 5 12"><path fill="#fff" d="M0 0h5v12z"/><path stroke="#222" d="M0 1l4 10"/></svg>
      <button class="sheet active">Opracowanie</button>
      <svg class="slant" viewBox="0 0 5 12"><path fill="#fff" d="M0 0h5L1 12H0z"/><path fill="none" stroke="#222" d="M4.500 0L1 11M3 5l2 6"/></svg>
      <button class="sheet">Przetwarzanie</button>
      <svg class="slant" viewBox="0 0 5 12"><path stroke="#222" d="M4.500 0L1 11"/></svg>
    </div>
  </div>
</section>

<footer class="status">
  <span class="pos">RX:199 RY:147</span>
  <span class="cell c-wide"></span><span class="cell c-gap"></span><span class="cell">11111</span><span class="cell">111</span><span class="cell">111</span>
</footer>
</body>
</html>
```

FILE: styles.css
```css
* { box-sizing: border-box; }
body {
  margin: 0;
  min-height: 100vh;
  display: flex;
  flex-direction: column;
  background: #ece9d8;
  border-bottom: 2px solid #2f7ae5;
  font-family: "DejaVu Sans Condensed", "DejaVu Sans", sans-serif;
  font-size: 7px;
  color: #111;
}
button { border: 0; padding: 0; background: none; font: inherit; color: inherit; }
svg { display: block; }
.defs { position: absolute; width: 0; height: 0; }
.fill { flex: 1; }

/* Title and menu */
.titlebar {
  height: 16px;
  display: flex;
  align-items: center;
  gap: 2px;
  padding: 0 1px 0 2px;
  background: linear-gradient(#2a8cf8, #0a5af0 20%, #0054e8 70%, #0062fc);
  color: #fff;
}
.appicon { width: 10px; height: 11px; }
.title { flex: 1; margin: 0; font: bold 8px/14px "Liberation Sans", sans-serif; white-space: nowrap; }
.win { width: 13px; height: 13px; border: 1px solid #e8f0ff; border-radius: 2px; background: linear-gradient(135deg, #6a9cf8, #1c4cd8); }
.win-close { background: linear-gradient(135deg, #f09070, #d03810); }
.menubar {
  height: 13px;
  display: flex;
  align-items: center;
  gap: 7px;
  padding: 0 2px 0 3px;
  line-height: 12px;
}
.docicon { width: 9px; height: 8px; margin-right: -3px; }
.mdi svg { width: 7px; height: 7px; }
.mdi { margin-left: -3px; background: #f8f7f0; padding: 1px; }

/* Toolbars */
.toolbar {
  height: 20px;
  display: flex;
  align-items: center;
  padding-left: 4px;
  border-top: 1px solid #fff;
  border-bottom: 1px solid #d2cebc;
}
.toolbar.second { height: 19px; padding-left: 7px; border-bottom-color: #aca899; }
.toolbar button, .vtools button { width: 15px; height: 17px; display: grid; place-items: center; }
.toolbar svg, .vtools svg { width: 12px; height: 12px; }
.toolbar svg { width: 11px; height: 11px; }
.toolbar .on, .vtools .on { background: #f8f7f1; border: 1px solid #c8c4b4; border-right-color: #fff; border-bottom-color: #fff; }
.sep { width: 1px; height: 17px; margin: 0 2px; background: #c5c2b2; }
.sep.wide { margin: 0 3px 0 4px; border-right: 1px solid #c5c2b2; }
.thin { width: 3px; }
.gap { width: 7px; }

/* Work area */
.work { flex: 1; display: flex; min-height: 0; }
.browser { width: 127px; padding: 4px 6px 0 4px; display: flex; flex-direction: column; }
.grip { height: 8px; display: flex; align-items: center; gap: 1px; }
.grip .lines { flex: 1; height: 4px; border: 1px solid #b8b4a4; border-left: 0; border-right: 0; }
.grip button, .sidegrip button { width: 8px; height: 8px; line-height: 7px; font-weight: bold; background: #f4f2e8; border: 1px solid #c0bcac; }
.treebox {
  flex: 1;
  display: grid;
  grid-template: minmax(0, 1fr) 11px / minmax(0, 1fr) 11px;
  background: #fff;
  border: 1px solid #55524a;
}
.treebox { padding-right: 2px; }
.tree { margin: 0; padding: 0; list-style: none; display: flex; flex-direction: column; font: 9px/12px "Liberation Sans", sans-serif; background: linear-gradient(90deg, transparent 17px, #d8d8d8 17px, #d8d8d8 18px, transparent 18px); }
.tree li { flex: 1; display: flex; align-items: center; gap: 4px; margin-left: 42px; padding-left: 1px; border-left: 1px dotted #b8b8b8; }
.tree li::before { content: ""; width: 5px; margin-right: -4px; border-top: 1px dotted #b8b8b8; }
.tree .root { margin-left: 27px; padding: 0; border: 0; gap: 3px; }
.tree .root::before { display: none; }
.tree svg { width: 10px; height: 9px; }
.tree .current { font-weight: bold; }
.tree .marked span { background: #ece9d8; }
.minus { width: 6px; height: 6px; border: 1px solid #b8a8a0; background: linear-gradient(#fff 1px, #777 1px, #777 3px, #fff 3px); margin-right: 1px; }
.vscroll { display: flex; flex-direction: column; background: #f6f5f0; }
.hscroll { display: flex; background: #f6f5f0; grid-column: 1; }
.arrow { width: 11px; height: 11px; display: grid; place-items: center; background: #c8d8fb; border: 1px solid #e8effe; border-radius: 2px; }
.arrow::before { content: ""; width: 4px; height: 4px; border: solid #40598c; border-width: 2px 0 0 2px; transform: rotate(45deg); }
.arrow.down::before { transform: rotate(225deg); }
.arrow.left::before { transform: rotate(-45deg); }
.arrow.right::before { transform: rotate(135deg); }
.thumb { background: #c4d4fa; border: 1px solid #dbe5fd; border-radius: 2px; }
.track-a { flex: 186; }
.vscroll .thumb { flex: 88; }
.track-b { flex: 147; }
.hscroll .thumb { flex: 72; }
.hscroll .rest { flex: 8; }
.vscroll.small { width: 11px; margin-right: 3px; }
.small .thumb { flex: 24; }
.small .track-b { flex: 16; }
.sidetab {
  align-self: flex-start;
  margin: 0 0 1px 5px;
  height: 16px;
  padding: 0 7px 0 3px;
  display: flex;
  align-items: center;
  gap: 2px;
  font: 9px/14px "Liberation Sans", sans-serif;
  border: 1px solid #55524a;
  border-top: 0;
  border-bottom-width: 2px;
}
.sidetab svg { width: 9px; height: 10px; }
.vtools { width: 21px; border-left: 1px solid #aca899; padding-top: 4px; }
.vt-body { display: flex; flex-direction: column; align-items: center; padding: 1px 0 11px; border-top: 1px solid #fff; border-bottom: 1px solid #aca899; background: #efedde; }
.vtools button { height: 13px; flex: none; }
.vtools.left { border-left-color: #7c786a; padding-right: 2px; }
.field { align-self: stretch; height: 10px; margin: 5px 0 4px; border: 1px solid #c8c4b4; border-left-color: #222; }
.vsep { align-self: stretch; height: 1px; margin: 3px 2px; background: #c0bcac; }
.vsep.tall { margin: 11px 2px 5px; }
.vsep.low { margin: 2px; }
.vtools.right { width: 22px; border-left: 2px solid #fff; padding-top: 28px; }
.vtools.right .vt-body { padding-top: 5px; }
.vtools .ab { font: bold 9px/12px "Liberation Sans", sans-serif; }

/* Schematic */
.canvas { flex: 1; min-width: 0; background: #000; }
.canvas svg { width: 100%; height: auto; }
.canvas path, .canvas circle { shape-rendering: crispEdges; fill: none; }
.canvas text { font-family: "DejaVu Sans Mono", "Liberation Mono", monospace; }
.canvas .s text, .canvas text.s { font-size: 5px; }
.canvas .m text { font-size: 7px; font-family: "Liberation Mono", monospace; }
.y { fill: #e8e830; }
.c { fill: #20d8e0; }
.g { fill: #18c830; }
.mid { text-anchor: middle; }
.end { text-anchor: end; }
.green path { stroke: #00a810; }
.green .lite { stroke: #28a028; }
.green .dash { stroke: #109018; stroke-dasharray: 16 1 2 1; }
.tick { stroke: #98b898; }
.red { stroke: #9c1018; }
.cyanl { stroke: #109098; }
.yl { stroke: #b8b020; }
.canvas .yf { fill: #e8d820; }
.pin circle { stroke: #a020b0; }
.canvas .term { fill: #10d040; }
.mark { stroke: #806070; }
.logo { font-weight: bold; text-anchor: middle; fill: #000; stroke: #10a028; stroke-width: 1px; }
.canvas .logo { font-family: "Liberation Sans", sans-serif; font-size: 11px; }
.edge { stroke: #a8a8a8; }

/* Message grid */
.messages { height: 81px; display: flex; border-top: 1px solid #fff; padding: 3px 2px 2px 1px; box-shadow: inset 0 2px #ece9d8, inset 0 3px #8c897c; }
.sidegrip { width: 10px; display: flex; flex-direction: column; align-items: center; }
.vlines { flex: 1; width: 4px; border: 1px solid #c0bcac; border-top: 0; border-bottom: 0; }
.msgbody { flex: 1; min-width: 0; border-left: 1px solid #77746a; }
.gridwrap { height: 62px; display: flex; border-top: 1px solid #77746a; border-bottom: 1px solid #77746a; }
table { border-collapse: collapse; table-layout: fixed; width: 614px; height: 61px; }
th { height: 13px; padding: 0; font: bold 8px/11px "DejaVu Sans Condensed", sans-serif; border: solid #66635a; border-width: 0 1px 2px 0; background: #ece9d8; box-shadow: inset 1px 1px #fff; }
td { height: 12px; padding: 0; text-align: center; line-height: 0; background: #d4d0c8; border: solid #b4b0aa; border-width: 0 1px 1px 0; }
td.wh { background: #fff; }
.w1 { width: 104px; } .w2 { width: 105px; } .w3 { width: 74px; } .w4 { width: 178px; } .w5 { width: 51px; } .w6 { width: 102px; }
input { appearance: none; margin: 0; width: 9px; height: 9px; border: 1px solid #333; background: #fff; }
.sheets { display: flex; height: 12px; }
.nav { width: 12px; display: grid; place-items: center; border: 1px solid #a09c90; border-left-color: #fff; }
.nav svg { width: 7px; height: 7px; }
.slant { width: 5px; height: 12px; }
.sheet { font: 9px/12px "Liberation Sans", sans-serif; padding: 0 1px; }
.sheet.active { background: #fff; }

/* Status bar */
.status { height: 14px; display: flex; align-items: center; gap: 2px; padding: 2px 1px 0; border-top: 1px solid #c8c4b4; }
.pos { flex: 1; }
.cell { width: 28px; height: 11px; line-height: 10px; border: 1px solid #b8b4a4; border-right-color: #fff; border-bottom-color: #fff; }
.c-wide { width: 195px; }
```
